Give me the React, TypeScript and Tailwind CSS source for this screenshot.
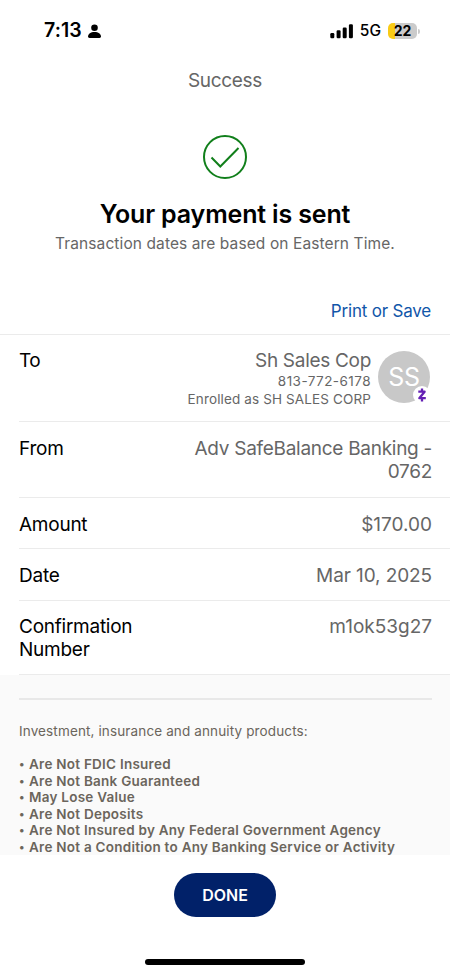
import React from 'react';

const details = [
  { label: 'From', value: 'Adv SafeBalance Banking - 0762', row: 'h-[76px] pt-[15px]', labelStyle: 'w-[120px] tracking-[-0.2px]', valueStyle: 'tracking-[-0.28px]' },
  { label: 'Amount', value: '$170.00', row: 'h-[51px] pt-[15px]', labelStyle: 'w-[120px] tracking-[-0.25px]', valueStyle: '' },
  { label: 'Date', value: 'Mar 10, 2025', row: 'h-[52px] pt-[15px]', labelStyle: 'w-[120px] tracking-[-0.2px]', valueStyle: 'tracking-[-0.1px]' },
  { label: 'Confirmation Number', value: 'm1ok53g27', row: 'h-[74px] pt-[14px]', labelStyle: 'w-[130px] tracking-[-0.25px]', valueStyle: '' },
];

const disclosures = [
  'Are Not FDIC Insured',
  'Are Not Bank Guaranteed',
  'May Lose Value',
  'Are Not Deposits',
  'Are Not Insured by Any Federal Government Agency',
  'Are Not a Condition to Any Banking Service or Activity',
];

const StatusBar: React.FC = () => (
  <div className="flex h-[62px] items-center pl-[44px] pr-[30px] text-black">
    <span className="text-[19.500px] font-semibold leading-none tracking-[0.1px]">7:13</span>
    <svg className="ml-[6px]" width="13" height="15" viewBox="0 0 13 15" fill="currentColor">
      <circle cx="6.5" cy="3.7" r="3.3" />
      <path d="M0 12.600C0 10 2.700 8 6.500 8S13 10 13 12.600c0 .9-.6 1.400-1.500 1.400h-10C.6 14 0 13.500 0 12.600Z" />
    </svg>
    <svg className="ml-auto" width="24" height="15" viewBox="0 0 24 15" fill="currentColor">
      <rect x="0.300" y="9" width="4" height="5.300" rx="1.200" />
      <rect x="6.600" y="6.300" width="4" height="8" rx="1.200" />
      <rect x="12.700" y="3.500" width="4" height="10.800" rx="1.200" />
      <rect x="18.900" y="0.300" width="4" height="14" rx="1.200" />
    </svg>
    <span className="ml-[6px] text-[15.500px] font-medium leading-none">5G</span>
    <div className="ml-[7px] flex h-[16px] w-[29px] items-center justify-center rounded-[5px] bg-[linear-gradient(to_right,#f9cb16_7px,#cbcbcb_7px)]">
      <span className="text-[14px] font-bold leading-none">22</span>
    </div>
    <div className="ml-px h-[5px] w-[2px] rounded-r-full bg-[#cbcbcb]" />
  </div>
);

const Avatar: React.FC = () => (
  <div className="relative ml-[7px] h-[52px] w-[52px] shrink-0 rounded-full bg-[#c8c8c8] text-center text-[25px] leading-[53px] tracking-[-0.3px] text-white">
    SS
    <div className="absolute left-[35px] top-[35px] flex h-[18px] w-[18px] items-center justify-center rounded-full bg-white">
      <svg width="10" height="14" viewBox="0 0 10 14" fill="none" stroke="#6420b4" strokeWidth="2.300">
        <path d="M5 0.500v3M5 10.500v3" />
        <path d="M1.300 3.700h6.300L2.300 10.200h6.500" strokeLinejoin="round" />
      </svg>
    </div>
  </div>
);

export default function App() {
  return (
    <div className="flex h-[975px] w-[450px] flex-col overflow-hidden bg-white font-['Inter',sans-serif] text-[#666666]">
      <StatusBar />

      <div className="flex h-[272px] flex-col items-center">
        <h1 className="mt-[7px] text-[19px] leading-[24px] tracking-[-0.3px]">Success</h1>
        <svg className="mt-[41px]" width="46" height="46" viewBox="0 0 46 46" fill="none" stroke="#117f1b" strokeWidth="2">
          <circle cx="23" cy="23" r="21" />
          <path d="M9.500 23.500l8.800 9L36.500 14" />
        </svg>
        <h2 className="mt-[18px] text-[25px] font-semibold leading-[32px] tracking-[-0.15px] text-black">Your payment is sent</h2>
        <p className="mt-[4px] text-[15.500px] leading-[20px] tracking-[0.1px]">Transaction dates are based on Eastern Time.</p>
        <button className="mr-[19px] mt-[46px] self-end text-[17px] leading-[22px] tracking-[-0.2px] text-[#1156a9]">Print or Save</button>
      </div>

      <div className="h-px w-full shrink-0 bg-[#ebebeb]" />
      <div className="ml-[19px] flex h-[87px] shrink-0 border-b border-[#ebebeb] pr-[20px] pt-[14px]">
        <span className="text-[19px] leading-[23px] tracking-[-0.5px] text-black">To</span>
        <div className="ml-auto text-right">
          <div className="text-[19px] leading-[23px] tracking-[-0.3px]">Sh Sales Cop</div>
          <div className="text-[13.500px] leading-[18px] tracking-[0.45px]">813-772-6178</div>
          <div className="text-[13.500px] leading-[18px] tracking-[0.13px]">Enrolled as SH SALES CORP</div>
        </div>
        <div className="mt-[2px]">
          <Avatar />
        </div>
      </div>

      {details.map((item) => (
        <div
          key={item.label}
          className={`ml-[19px] flex shrink-0 justify-between border-b border-[#ebebeb] pr-[18px] text-[19px] leading-[23px] ${item.row}`}
        >
          <span className={`text-black ${item.labelStyle}`}>{item.label}</span>
          <span className={`w-[250px] text-right ${item.valueStyle}`}>{item.value}</span>
        </div>
      ))}

      <div className="h-[180px] shrink-0 overflow-hidden bg-[#fafafa] pl-[19px] pr-[18px] text-[#6b655c]">
        <div className="mt-[23px] h-[2px] bg-[#e8e8e8]" />
        <p className="mt-[21px] text-[13.500px] leading-[20px] tracking-[0.13px]">Investment, insurance and annuity products:</p>
        <ul className="mt-[15px] text-[13.500px] font-semibold leading-[16.500px] tracking-[0.25px]">
          {disclosures.map((text) => (
            <li key={text} className="flex whitespace-nowrap">
              <span className="w-[10px] text-[11px]">•</span>
              <span>{text}</span>
            </li>
          ))}
        </ul>
      </div>

      <div className="flex flex-1 flex-col items-center">
        <button className="mt-[18px] h-[44px] w-[102px] rounded-full bg-[#012169] text-[16px] font-semibold text-white">DONE</button>
        <div className="mt-[42px] h-[6px] w-[160px] rounded-full bg-black" />
      </div>
    </div>
  );
}
